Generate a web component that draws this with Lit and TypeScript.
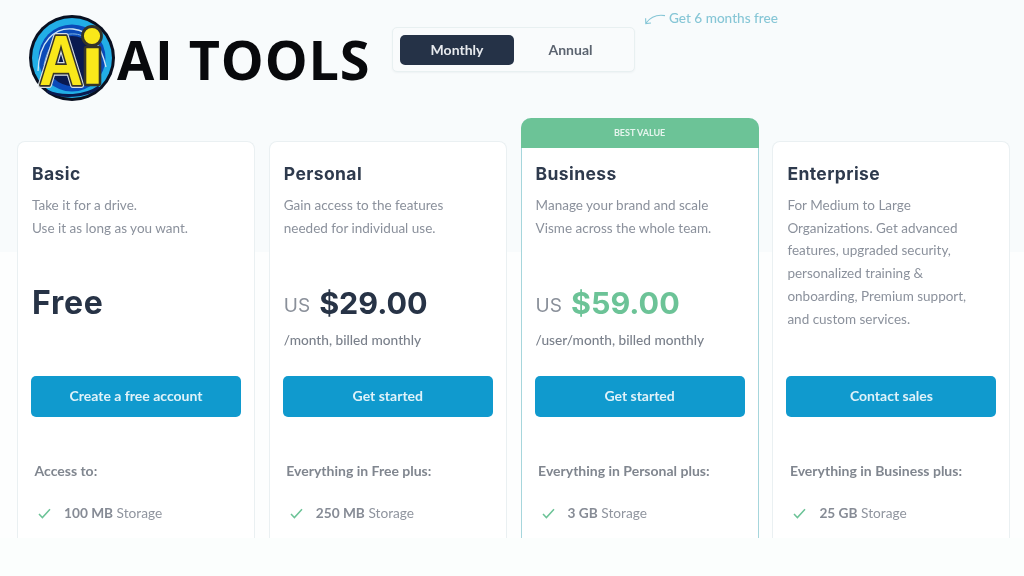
import { LitElement, html, css, svg } from "lit";
import { customElement } from "lit/decorators.js";

interface Plan {
  name: string; desc: string; us?: boolean; price: string; sub: string; cta: string;
  access: string; amount: string; featured?: boolean;
}

const plans: Plan[] = [
  { name: "Basic", desc: "Take it for a drive.<br>Use it as long as you want.", price: "Free", sub: "", cta: "Create a free account", access: "Access to:", amount: "100 MB" },
  { name: "Personal", desc: "Gain access to the features<br>needed for individual use.", us: true, price: "$29.00", sub: "/month, billed monthly", cta: "Get started", access: "Everything in Free plus:", amount: "250 MB" },
  { name: "Business", desc: "Manage your brand and scale<br>Visme across the whole team.", us: true, price: "$59.00", sub: "/user/month, billed monthly", cta: "Get started", access: "Everything in Personal plus:", amount: "3 GB", featured: true },
  { name: "Enterprise", desc: "For Medium to Large<br>Organizations. Get advanced<br>features, upgraded security,<br>personalized training &amp;<br>onboarding, Premium support,<br>and custom services.", price: "", sub: "", cta: "Contact sales", access: "Everything in Business plus:", amount: "25 GB" },
];

const logo = svg`
  <circle cx="43" cy="43" r="43" fill="#0a1020"/>
  <circle cx="43" cy="43" r="40" fill="#22aee6"/>
  <circle cx="43" cy="43" r="33.5" fill="#0b4ab8"/>
  <circle cx="43" cy="46" r="25" fill="#0a1a50"/>
  <path d="M9 56C10 26 26 12 44 14S72 30 77 52" fill="none" stroke="#cfe6f5" stroke-width="1.3"/>
  <path d="M15 50C20 26 32 18 46 19S66 34 71 50" fill="none" stroke="#7fb4e0" stroke-width="1"/>
  <path d="M18 76C32 83 56 82 70 72" fill="none" stroke="#0a1a50" stroke-width="3"/>
  <text x="10" y="70" font-family="Liberation Sans" font-weight="700" font-size="70" textLength="44" lengthAdjust="spacingAndGlyphs"
    fill="#f9e81a" stroke="#d8dfe6" stroke-width="6" stroke-linejoin="round">A</text>
  <text x="10" y="70" font-family="Liberation Sans" font-weight="700" font-size="70" textLength="44" lengthAdjust="spacingAndGlyphs"
    fill="#f9e81a" stroke="#34342a" stroke-width="3.6" stroke-linejoin="round" paint-order="stroke">A</text>
  <rect x="56" y="32" width="15" height="38" rx="1.5" fill="#f9e81a" stroke="#34342a" stroke-width="2.6"/>
  <circle cx="63" cy="21" r="9.5" fill="#f9e81a" stroke="#34342a" stroke-width="2.8"/>
`;

@customElement("app-root")
export class AppRoot extends LitElement {
  static styles = css`
    :host { display: block; width: 1024px; height: 576px; overflow: hidden; background: #fbfefd; font-family: "Lato", sans-serif; }
    .page { height: 538px; overflow: hidden; background: linear-gradient(#f8fbfc 0 252px, #fdfefe 252px); filter: blur(0.45px); }
    .head { height: 141px; display: flex; align-items: flex-start; box-sizing: border-box; padding: 15px 0 0 29px; }
    .logo { width: 86px; height: 86px; flex: none; display: block; margin-right: 2px; overflow: visible; }
    .brand { font-family: "Open Sans", sans-serif; font-weight: 700; font-size: 54px; line-height: 88px; letter-spacing: 0.85px; color: #08090c; white-space: nowrap; width: 252px; flex: none; }
    .toggle { margin: 12px 0 0 23px; width: 243px; height: 45px; box-sizing: border-box; padding: 7px; display: flex; flex: none; border: 1px solid #e8f0f1; border-radius: 5px; background: #f9fbfc; box-shadow: 0 1px 2px #eef2f4; }
    .opt { width: 114px; height: 30px; box-sizing: border-box; padding-bottom: 2px; display: flex; align-items: center; justify-content: center; font-size: 14px; font-weight: 700; color: #5c6470; border-radius: 5px; }
    .opt.on { background: #253247; color: #e7eaee; }
    .second { margin-left: 0; flex: 1; }
    .note { margin: -5px 0 0 9px; display: flex; align-items: center; gap: 3px; color: #86c6d6; font-size: 13.6px; font-weight: 500; white-space: nowrap; }
    .note svg { display: block; margin-top: 3px; }
    .cards { display: grid; grid-template-columns: repeat(4, 238px); column-gap: 13.8px; padding-left: 17px; height: 500px; align-items: start; }
    .card { height: 440px; box-sizing: border-box; border: 1px solid #eaf0f2; border-bottom: 0; border-radius: 8px 8px 0 0; background: #fff; }
    .card.feat { margin-top: -23px; height: 463px; border-color: #a6d6dc; border-top: 0; border-radius: 10px 10px 0 0; }
    .badge { height: 30px; margin: 0 -1px; background: #6cc397; border-radius: 10px 10px 0 0; color: #e6f5ee; font-size: 9px; font-weight: 700; display: flex; align-items: center; justify-content: center; padding-bottom: 1px; box-sizing: border-box; }
    .body { padding: 21px 14px 0; }
    .feat .body { padding-top: 15px; }
    .name { font-family: "Inter", sans-serif; font-weight: 700; font-size: 17.5px; line-height: 22px; letter-spacing: 0.4px; color: #2e3a4d; }
    .desc { height: 116px; margin-top: 9px; font-size: 13.5px; line-height: 22.7px; color: #8b919c; white-space: nowrap; }
    .price { height: 42px; display: flex; align-items: center; gap: 9px; font-family: "Inter", sans-serif; font-weight: 700; font-size: 30.5px; color: #273346; margin-top: -29px; }
    .price .us { font-weight: 400; font-size: 19px; color: #8a909a; padding-top: 6px; }
    .price .free { font-size: 32px; letter-spacing: 0.8px; }
    .feat .amt { color: #6cc397; }
    .sub { height: 20px; margin-top: 7px; font-size: 13.7px; line-height: 20px; font-weight: 500; color: #7a808b; white-space: nowrap; }
    .cta { margin: 26px -1px 0; height: 41px; box-sizing: border-box; padding-bottom: 2px; display: flex; align-items: center; justify-content: center; background: #109ace; border-radius: 5px; color: #dff2f9; font-size: 14px; font-weight: 700; }
    .access { margin: 45px 0 0 2.5px; font-size: 14px; line-height: 18px; font-weight: 700; color: #80868f; white-space: nowrap; }
    .feature { margin: 24px 0 0 6px; display: flex; align-items: center; font-size: 13.7px; line-height: 18px; color: #90959f; white-space: nowrap; }
    .feature svg { width: 13px; height: 11px; flex: none; margin-right: 13px; }
    .feature b { font-weight: 700; color: #868b95; margin-right: 3.5px; }
  `;

  private card(p: Plan) {
    return html`<div class="card ${p.featured ? "feat" : ""}">
      ${p.featured ? html`<div class="badge">BEST VALUE</div>` : ""}
      <div class="body">
        <div class="name">${p.name}</div>
        <div class="desc" .innerHTML=${p.desc}></div>
        <div class="price">${p.us ? html`<span class="us">US</span>` : ""}<span class="amt ${p.price === "Free" ? "free" : ""}">${p.price}</span></div>
        <div class="sub">${p.sub}</div>
        <div class="cta">${p.cta}</div>
        <div class="access">${p.access}</div>
        <div class="feature">
          <svg viewBox="0 0 13 11"><path d="M1 6l3.4 3.6L12 1.2" fill="none" stroke="#6cc397" stroke-width="1.5"/></svg>
          <b>${p.amount}</b> Storage
        </div>
      </div>
    </div>`;
  }

  render() {
    return html`<div class="page">
      <div class="head">
        <svg class="logo" viewBox="0 0 86 86">${logo}</svg>
        <div class="brand">AI TOOLS</div>
        <div class="toggle"><div class="opt on">Monthly</div><div class="opt second">Annual</div></div>
        <div class="note">
          <svg width="22" height="11" viewBox="0 0 22 11"><path d="M21 1.6C14 .4 7 2.4 2 9M1.6 4.2 1.8 9.6 7 9" fill="none" stroke="#86c6d6" stroke-width="1.1"/></svg>
          Get 6 months free
        </div>
      </div>
      <div class="cards">${plans.map((p) => this.card(p))}</div>
    </div>`;
  }
}
